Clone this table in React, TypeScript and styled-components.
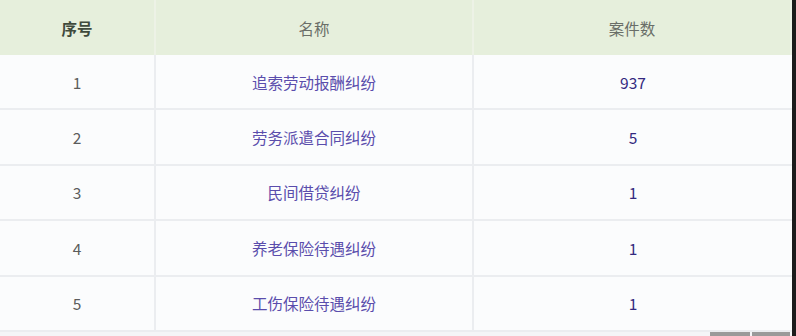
import { Fragment } from "react";
import styled, { createGlobalStyle } from "styled-components";

const cases = [
  { id: 1, name: "追索劳动报酬纠纷", count: 937 },
  { id: 2, name: "劳务派遣合同纠纷", count: 5 },
  { id: 3, name: "民间借贷纠纷", count: 1 },
  { id: 4, name: "养老保险待遇纠纷", count: 1 },
  { id: 5, name: "工伤保险待遇纠纷", count: 1 },
];

const GlobalStyle = createGlobalStyle`
  html, body {
    margin: 0;
    padding: 0;
    background: #1c1c1c;
  }
  body {
    font-family: "Noto Sans CJK SC", "Noto Sans", sans-serif;
  }
`;

const Page = styled.div`
  width: 792px;
  height: 336px;
  background: #f4f5f7;
  overflow: hidden;
`;

const Table = styled.div`
  display: grid;
  grid-template-columns: 156px 318px 318px;
`;

const HeadCell = styled.div<{ $strong?: boolean }>`
  height: 55px;
  display: flex;
  align-items: center;
  justify-content: center;
  background: #e6efdc;
  border-right: 2px solid #edf2e6;
  font-size: 15.5px;
  font-weight: ${(p) => (p.$strong ? 700 : 400)};
  color: ${(p) => (p.$strong ? "#3f4a3c" : "#6a6e68")};

  &:last-child {
    border-right: none;
  }
`;

const Cell = styled.div<{ $tone: "index" | "name" | "count" }>`
  box-sizing: border-box;
  height: 55.4px;
  display: flex;
  align-items: center;
  justify-content: center;
  background: #fbfcfd;
  border-bottom: 2px solid #ebedf0;
  border-right: 2px solid #ebedf0;
  font-size: 15.5px;
  color: ${(p) =>
    p.$tone === "index" ? "#5c5c5c" : p.$tone === "name" ? "#5a4dac" : "#33297f"};

  &:nth-child(3n) {
    border-right: none;
  }
`;

const Footer = styled.div`
  height: 4px;
  display: flex;
  justify-content: flex-end;
  gap: 2px;
  padding-right: 2px;
`;

const ScrollPiece = styled.div<{ $w: number }>`
  width: ${(p) => p.$w}px;
  background: #9a9a9a;
`;

export default function App() {
  return (
    <>
      <GlobalStyle />
      <Page>
        <Table>
          <HeadCell $strong>序号</HeadCell>
          <HeadCell>名称</HeadCell>
          <HeadCell>案件数</HeadCell>
          {cases.map((c) => (
            <Fragment key={c.id}>
              <Cell $tone="index">{c.id}</Cell>
              <Cell $tone="name">{c.name}</Cell>
              <Cell $tone="count">{c.count}</Cell>
            </Fragment>
          ))}
        </Table>
        <Footer>
          <ScrollPiece $w={40} />
          <ScrollPiece $w={38} />
        </Footer>
      </Page>
    </>
  );
}
